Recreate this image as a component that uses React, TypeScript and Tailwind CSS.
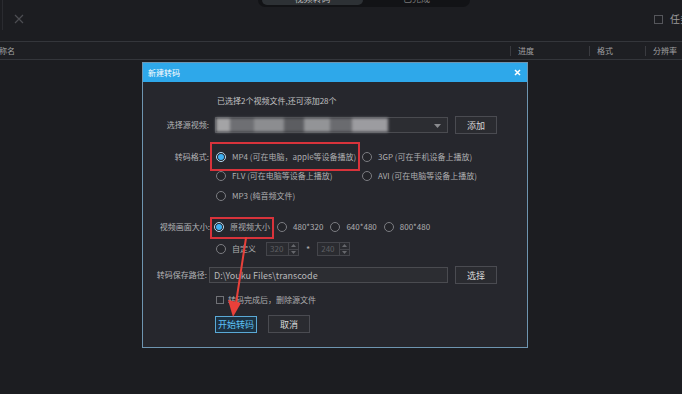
import React from 'react';

function Radio({ checked }: { checked?: boolean }) {
  if (checked) {
    return (
      <span className="flex h-[10px] w-[10px] shrink-0 items-center justify-center rounded-full border border-[#b9dcf2] bg-[#1f2026]">
        <span className="h-[6px] w-[6px] rounded-full bg-[#3fb0f2]" />
      </span>
    );
  }
  return <span className="h-[10px] w-[10px] shrink-0 rounded-full border border-[#7c7d82] bg-[#232429]" />;
}

function Option({ checked, label, className = '' }: { checked?: boolean; label: string; className?: string }) {
  return (
    <span className={`relative flex h-[17px] items-center gap-[6px] ${className}`}>
      <Radio checked={checked} />
      <span className="whitespace-nowrap text-[#aeaeb0]">{label}</span>
    </span>
  );
}

function SpinBox({ value }: { value: string }) {
  return (
    <span className="flex h-[14px] w-[33px] items-center border border-[#44454b] bg-[#2a2b30]">
      <span className="flex-1 pl-[3px] text-[#5d5e62]">{value}</span>
      <span className="flex h-full w-[10px] flex-col border-l border-[#44454b]">
        <span className="flex flex-1 items-center justify-center">
          <svg width="5" height="3" viewBox="0 0 5 3"><path d="M0 3 L2.5 0 L5 3 Z" fill="#66676c" /></svg>
        </span>
        <span className="flex flex-1 items-center justify-center border-t border-[#44454b]">
          <svg width="5" height="3" viewBox="0 0 5 3"><path d="M0 0 L2.5 3 L5 0 Z" fill="#66676c" /></svg>
        </span>
      </span>
    </span>
  );
}

function Btn({ children, primary }: { children: React.ReactNode; primary?: boolean }) {
  return (
    <span
      className={
        primary
          ? 'flex h-[17px] w-[42px] items-center justify-center border border-[#5aa9d6] bg-[#1d3242] text-[9px] text-[#5cc0f5]'
          : 'flex h-[18px] w-[42px] items-center justify-center border border-[#4a4b51] bg-[#2a2b30] text-[9px] text-[#d8d8d8]'
      }
    >
      {children}
    </span>
  );
}

export default function App() {
  return (
    <div className="relative h-[394px] w-[682px] overflow-hidden bg-[#1c1d21] font-['Noto_Sans_CJK_SC','Noto_Sans',sans-serif] text-[8px] leading-none">
      {/* top toolbar */}
      <div className="flex h-[41px] flex-col">
        <div className="ml-[258px] flex h-[7px] w-[212px] overflow-hidden rounded-b-[7px] bg-[#121316]">
          <div className="ml-[4px] flex h-[5px] w-[101px] items-end justify-center overflow-hidden rounded-b-[6px] bg-[#2d3135]">
            <span className="-translate-y-[2px] text-[9px] text-[#bdbdbd]">视频转码</span>
          </div>
          <div className="flex h-[5px] flex-1 items-end justify-center overflow-hidden">
            <span className="-translate-y-[2px] text-[9px] text-[#7a7a7a]">已完成</span>
          </div>
        </div>
        <div className="flex items-start pt-[7px]">
          <div className="ml-[2px] -mt-[14px] h-[30px] w-px bg-[#2a2b30]" />
          <svg className="ml-[11px]" width="10" height="10" viewBox="0 0 10 10">
            <path d="M1 1 L9 9 M9 1 L1 9" stroke="#4c4d52" strokeWidth="1.2" />
          </svg>
          <div className="ml-auto flex items-center gap-[7px]">
            <span className="h-[9px] w-[9px] border border-[#55565b]" />
            <span className="-mr-[8px] whitespace-nowrap text-[10px] text-[#9a9a9c]">任务</span>
          </div>
        </div>
      </div>

      {/* list header */}
      <div className="flex h-[19px] items-center border-y border-[#34363b] bg-[#1e1f23] text-[#a0a0a2]">
        <span className="-ml-[1px]">称名</span>
        <span className="ml-auto h-[10px] w-px bg-[#3a3b40]" />
        <span className="ml-[7px] w-[71px]">进度</span>
        <span className="h-[10px] w-px bg-[#3a3b40]" />
        <span className="ml-[7px] w-[48px]">格式</span>
        <span className="h-[10px] w-px bg-[#3a3b40]" />
        <span className="ml-[7px] w-[29px] whitespace-nowrap">分辨率</span>
      </div>

      {/* dialog */}
      <div className="absolute left-[142px] top-[62px] flex h-[286px] w-[386px] flex-col border border-[#6e95b0] bg-[#26272d]">
        <div className="flex h-[19px] items-center bg-[#2ea8ea] px-[5px] text-white">
          <span>新建转码</span>
          <svg className="ml-auto mr-[1px]" width="7" height="7" viewBox="0 0 7 7">
            <path d="M1 1 L6 6 M6 1 L1 6" stroke="#ffffff" strokeWidth="1.5" />
          </svg>
        </div>

        <div className="flex flex-1 flex-col">
          <div className="ml-[74px] mt-[15px] text-[#c2c2c4]">已选择2个视频文件,还可添加28个</div>

          {/* source */}
          <div className="mt-[11px] flex h-[18px] items-center">
            <span className="w-[66px] text-right text-[#b5b5b7]">选择源视频:</span>
            <div className="relative ml-[6px] flex h-[16px] w-[233px] items-center border border-[#4a4b50] bg-[#2c2d32]">
              <div className="flex h-full w-[172px] blur-[1.5px]">
                <span className="w-[14px] bg-[#a4a4a6]" />
                <span className="w-[24px] bg-[#6e6f73]" />
                <span className="w-[30px] bg-[#8c8d90]" />
                <span className="w-[20px] bg-[#5c5d61]" />
                <span className="w-[26px] bg-[#939497]" />
                <span className="w-[22px] bg-[#6a6b6f]" />
                <span className="w-[36px] bg-[#9c9ca0]" />
              </div>
              <svg className="absolute right-[6px] top-[6px]" width="7" height="4" viewBox="0 0 7 4">
                <path d="M0 0 L3.5 4 L7 0 Z" fill="#8a8b8f" />
              </svg>
            </div>
            <span className="ml-[7px]">
              <Btn>添加</Btn>
            </span>
          </div>

          {/* format */}
          <div className="mt-[14px] flex h-[18px] items-center">
            <span className="w-[66px] text-right text-[#b5b5b7]">转码格式:</span>
            <div className="ml-[7px] grid grid-cols-[146px_auto]">
              <span className="relative">
                <Option checked label="MP4 (可在电脑，apple等设备播放)" />
                <span className="absolute -left-[6px] -top-[7px] h-[29px] w-[150px] border-2 border-[#d8333b]" />
              </span>
              <Option label="3GP (可在手机设备上播放)" />
            </div>
          </div>
          <div className="ml-[73px] mt-[1px] grid h-[18px] grid-cols-[146px_auto] items-center">
            <Option label="FLV  (可在电脑等设备上播放)" />
            <Option label="AVI  (可在电脑等设备上播放)" />
          </div>
          <div className="ml-[73px] mt-[2px] flex h-[18px] items-center">
            <Option label="MP3 (纯音频文件)" />
          </div>

          {/* size */}
          <div className="mt-[13px] flex h-[18px] items-center">
            <span className="w-[67px] text-right text-[#b5b5b7]">视频画面大小:</span>
            <div className="ml-[4px] flex items-center gap-[7px]">
              <span className="relative">
                <Option checked label="原视频大小" />
                <span className="absolute -left-[4px] -right-[4px] -top-[2px] -bottom-[3px] border-2 border-[#d8333b]" />
              </span>
              <Option label="480*320" />
              <Option label="640*480" />
              <Option label="800*480" />
            </div>
          </div>
          <div className="ml-[73px] mt-[4px] flex h-[18px] items-center">
            <Option label="自定义" />
            <span className="ml-[10px]">
              <SpinBox value="320" />
            </span>
            <span className="ml-[7px] text-[9px] text-[#aeaeb0]">*</span>
            <span className="ml-[7px]">
              <SpinBox value="240" />
            </span>
          </div>

          {/* path */}
          <div className="mt-[8px] flex h-[18px] items-center">
            <span className="w-[64px] text-right text-[#b5b5b7]">转码保存路径:</span>
            <div className="ml-[2px] flex h-[16px] w-[239px] items-center border border-[#4a4b50] bg-[#2c2d32] pl-[4px] text-[9px] text-[#b8b8ba]">
              D:\Youku Files\transcode
            </div>
            <span className="ml-[7px]">
              <Btn>选择</Btn>
            </span>
          </div>

          {/* delete source */}
          <div className="ml-[73px] mt-[7px] flex h-[18px] items-center gap-[4px]">
            <span className="h-[8px] w-[8px] border border-[#707176]" />
            <span className="text-[#aeaeb0]">转码完成后，删除源文件</span>
          </div>

          {/* actions */}
          <div className="ml-[72px] mt-[6px] flex items-center gap-[11px]">
            <Btn primary>开始转码</Btn>
            <Btn>取消</Btn>
          </div>
        </div>
      </div>

      {/* red annotation arrow */}
      <svg className="pointer-events-none absolute left-0 top-0" width="682" height="394" viewBox="0 0 682 394">
        <path d="M246 238 L236 303" stroke="#e8403a" strokeWidth="2" strokeLinecap="round" />
        <path d="M228 300 L241 303 L233 317 Z" fill="#e8403a" />
      </svg>
    </div>
  );
}
